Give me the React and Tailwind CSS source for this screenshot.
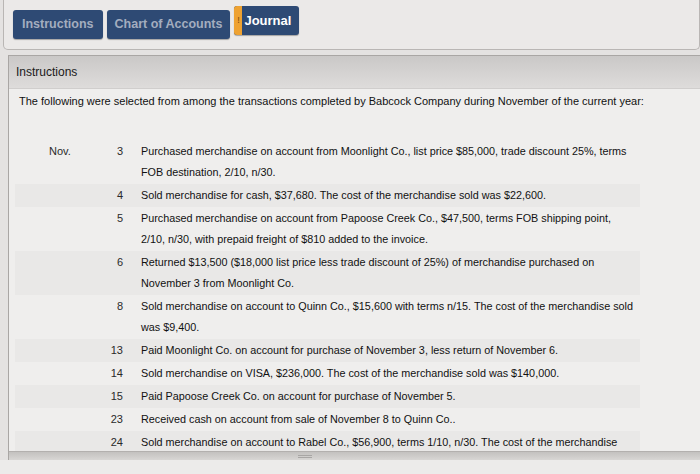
import React from "react";

const rows = [
  { d: "3", nov: true, lines: ["Purchased merchandise on account from Moonlight Co., list price $85,000, trade discount 25%, terms", "FOB destination, 2/10, n/30."] },
  { d: "4", lines: ["Sold merchandise for cash, $37,680. The cost of the merchandise sold was $22,600."] },
  { d: "5", lines: ["Purchased merchandise on account from Papoose Creek Co., $47,500, terms FOB shipping point,", "2/10, n/30, with prepaid freight of $810 added to the invoice."] },
  { d: "6", lines: ["Returned $13,500 ($18,000 list price less trade discount of 25%) of merchandise purchased on", "November 3 from Moonlight Co."] },
  { d: "8", lines: ["Sold merchandise on account to Quinn Co., $15,600 with terms n/15. The cost of the merchandise sold", "was $9,400."] },
  { d: "13", lines: ["Paid Moonlight Co. on account for purchase of November 3, less return of November 6."] },
  { d: "14", lines: ["Sold merchandise on VISA, $236,000. The cost of the merchandise sold was $140,000."] },
  { d: "15", lines: ["Paid Papoose Creek Co. on account for purchase of November 5."] },
  { d: "23", lines: ["Received cash on account from sale of November 8 to Quinn Co.."] },
  { d: "24", lines: ["Sold merchandise on account to Rabel Co., $56,900, terms 1/10, n/30. The cost of the merchandise"] },
];

export default function App() {
  return (
    <div className="w-[700px] h-[474px] overflow-hidden bg-[#e4e2e1] font-['Liberation_Sans',Arial,sans-serif] text-[#222]">
      {/* Tab bar box */}
      <div className="ml-[3px] h-[50px] border border-t-0 border-[#b9b6b4] rounded-b-[5px] bg-[#ebe9e8] flex items-start gap-[4px] pl-[9px] pt-[10px]">
        <div className="h-[29px] px-[9px] flex items-center rounded-[3px] bg-[#2e4a74] text-[#a3adbf] text-[12.5px] font-bold shadow-[0_1px_1px_rgba(0,0,0,0.3)]">
          Instructions
        </div>
        <div className="h-[29px] px-[8px] flex items-center rounded-[3px] bg-[#2e4a74] text-[#a3adbf] text-[12.5px] font-bold shadow-[0_1px_1px_rgba(0,0,0,0.3)]">
          Chart of Accounts
        </div>
        <div className="h-[29px] flex items-stretch rounded-[3px] overflow-hidden bg-[#2e4a74] text-white text-[13px] font-bold shadow-[0_1px_1px_rgba(0,0,0,0.3)] mt-[-4px]">
          <div className="w-[8px] bg-[#eea232] flex items-center justify-center text-[#7a4a10] text-[9px] font-normal">!</div>
          <div className="pl-[2px] pr-[8px] flex items-center">Journal</div>
        </div>
      </div>

      {/* Panel */}
      <div className="mt-[5px] ml-[8px] border-l border-t border-[#a9a6a4]">
        <div className="h-[33px] flex items-center pl-[7px] text-[12px] text-[#1a1a1a] bg-gradient-to-b from-[#cac8c7] to-[#dedcdb] border-b border-[#d0cecd]">
          Instructions
        </div>
        <div className="h-[362px] overflow-hidden bg-[#efeeed]">
          <p className="pl-[10px] pt-[3px] text-[11px] leading-[18px] text-[#111] whitespace-nowrap">
            The following were selected from among the transactions completed by Babcock Company during November of the current year:
          </p>
          <div className="mt-[30px] pl-[6px] pr-[60px]">
            {rows.map((r, i) => (
              <div
                key={r.d}
                className={
                  "flex py-[1px] " + (i % 2 === 1 ? "bg-[#e9e8e7]" : "bg-[#efeeed]")
                }
              >
                <div className="w-[68px] shrink-0 pl-[34px] text-[11px] leading-[21px] text-[#2a2a2a]">
                  {r.nov ? "Nov." : ""}
                </div>
                <div className="w-[40px] shrink-0 text-right text-[11px] leading-[21px] text-[#2a2a2a]">{r.d}</div>
                <div className="pl-[18px] text-[10.8px] leading-[21px] text-[#111]">
                  {r.lines.map((l) => (
                    <div key={l} className="whitespace-nowrap">{l}</div>
                  ))}
                </div>
              </div>
            ))}
          </div>
        </div>
        <div className="h-[9px] bg-gradient-to-b from-[#c3c1bf] to-[#d8d6d4] border-t border-[#b3b0ae] flex justify-center items-center">
          <div className="w-[14px] h-[3px] border-y border-[#a8a6a4] ml-[-100px]"></div>
        </div>
      </div>
      <div className="h-[20px] bg-[#ecebea]"></div>
    </div>
  );
}
